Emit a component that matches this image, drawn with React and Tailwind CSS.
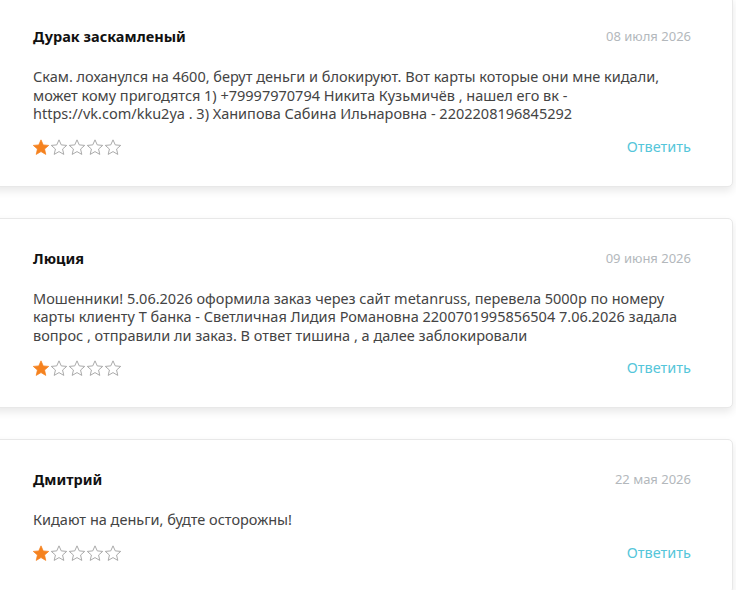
import React from "react";

const reviews = [
  {
    name: "Дурак заскамленый",
    date: "08 июля 2026",
    text: "Скам. лоханулся на 4600, берут деньги и блокируют. Вот карты которые они мне кидали, может кому пригодятся 1) +79997970794 Никита Кузьмичёв , нашел его вк - https://vk.com/kku2ya . 3) Ханипова Сабина Ильнаровна - 2202208196845292",
  },
  {
    name: "Люция",
    date: "09 июня 2026",
    text: "Мошенники! 5.06.2026 оформила заказ через сайт metanruss, перевела 5000р по номеру карты клиенту Т банка - Светличная Лидия Романовна 2200701995856504 7.06.2026 задала вопрос , отправили ли заказ. В ответ тишина , а далее заблокировали",
  },
  {
    name: "Дмитрий",
    date: "22 мая 2026",
    text: "Кидают на деньги, будте осторожны!",
  },
];

function Star({ filled }) {
  return (
    <svg width="18" height="16" viewBox="0 0 24 22" className="shrink-0">
      <path
        d="M12 1.2l3.1 6.9 7.5.7-5.7 5 1.7 7.4L12 17.3l-6.6 3.9 1.7-7.4-5.7-5 7.5-.7z"
        fill={filled ? "#f5821f" : "none"}
        stroke={filled ? "#f5821f" : "#a5a5a5"}
        strokeWidth={filled ? 1 : 1.3}
        strokeLinejoin="miter"
      />
    </svg>
  );
}

function Review({ r, first }) {
  return (
    <div
      className={`bg-white rounded-[5px] border border-[#e8e8e8] shadow-[0_4px_8px_rgba(0,0,0,0.09)] pl-[41px] pr-[41px] pt-[30px] pb-[27px] ${first ? "-mt-[4px]" : ""}`}
    >
      <div className="flex items-center justify-between h-[20px]">
        <div className="text-[14.5px] font-bold text-[#111]">{r.name}</div>
        <div className="text-[13px] text-[#b3b8bc]">{r.date}</div>
      </div>
      <div className="mt-[20px] text-[14.5px] leading-[18.5px] text-[#444]">
        {r.text}
      </div>
      <div className="mt-[12px] flex items-center justify-between h-[24px]">
        <div className="flex items-center -ml-[1px]">
          <Star filled />
          <Star />
          <Star />
          <Star />
          <Star />
        </div>
        <div className="text-[14.5px] text-[#55c6da]">Ответить</div>
      </div>
    </div>
  );
}

export default function App() {
  return (
    <div
      className="w-[736px] h-[590px] overflow-hidden bg-white"
      style={{ fontFamily: '"Noto Sans", "Open Sans", sans-serif' }}
    >
      <div className="flex flex-col gap-[31px] ml-[-9px] mr-[3px]">
        {reviews.map((r, i) => (
          <Review key={i} r={r} first={i === 0} />
        ))}
      </div>
    </div>
  );
}
